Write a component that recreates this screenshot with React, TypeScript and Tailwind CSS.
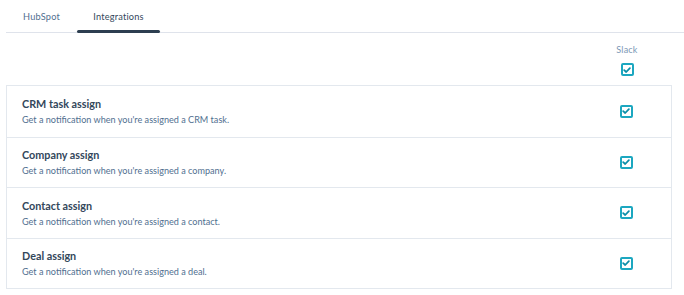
const rows = [
  { title: 'CRM task assign', desc: "Get a notification when you're assigned a CRM task." },
  { title: 'Company assign', desc: "Get a notification when you're assigned a company." },
  { title: 'Contact assign', desc: "Get a notification when you're assigned a contact." },
  { title: 'Deal assign', desc: "Get a notification when you're assigned a deal." },
];

function Check() {
  return (
    <span className="flex h-[13px] w-[13px] items-center justify-center rounded-[2px] border-2 border-[#1ca7c0] bg-white">
      <svg viewBox="0 0 10 10" className="h-[8px] w-[8px]">
        <path d="M1.5 5.2 L4 7.5 L8.6 2.6" fill="none" stroke="#0a8ea8" strokeWidth={2.2} strokeLinecap="round" strokeLinejoin="round" />
      </svg>
    </span>
  );
}

export default function App() {
  return (
    <div className="h-[295px] w-[684px] overflow-hidden bg-white pl-[6px] text-[#33475b]" style={{ fontFamily: 'Lato, "Open Sans", sans-serif' }}>
      <div className="flex h-[33px] border-b border-[#dfe3eb]">
        <div className="flex w-[71px] items-center justify-center pt-[2px] text-[9.2px] tracking-[0.2px] text-[#516f90]">HubSpot</div>
        <div className="relative flex w-[83px] items-center justify-center pt-[2px] text-[9.2px] tracking-[0.2px] text-[#33475b]">
          Integrations
          <span className="absolute bottom-[-1px] left-0 right-0 h-[3px] rounded-full bg-[#2d3e50]" />
        </div>
      </div>
      <div className="flex w-[666px] flex-col items-end pr-[30px] pt-[11px]">
        <div className="flex w-[30px] flex-col items-center">
          <span className="text-[9px] leading-[11px] tracking-[0.2px] text-[#7c98b6]">Slack</span>
          <span className="mt-[8px]"><Check /></span>
        </div>
      </div>
      <div className="mt-[9px] w-[666px] border border-[#e3e8ee]">
        {rows.map((r, i) => (
          <div key={r.title} className={`flex h-[50.5px] items-center justify-between pl-[15px] pr-[30px] ${i > 0 ? 'border-t border-[#e3e8ee]' : ''}`}>
            <div className="flex flex-col">
              <span className="text-[10.8px] font-bold leading-[15px] text-[#33475b]">{r.title}</span>
              <span className="mt-[2px] text-[9.1px] leading-[13px] text-[#516f90]">{r.desc}</span>
            </div>
            <div className="flex w-[30px] justify-center"><Check /></div>
          </div>
        ))}
      </div>
    </div>
  );
}
